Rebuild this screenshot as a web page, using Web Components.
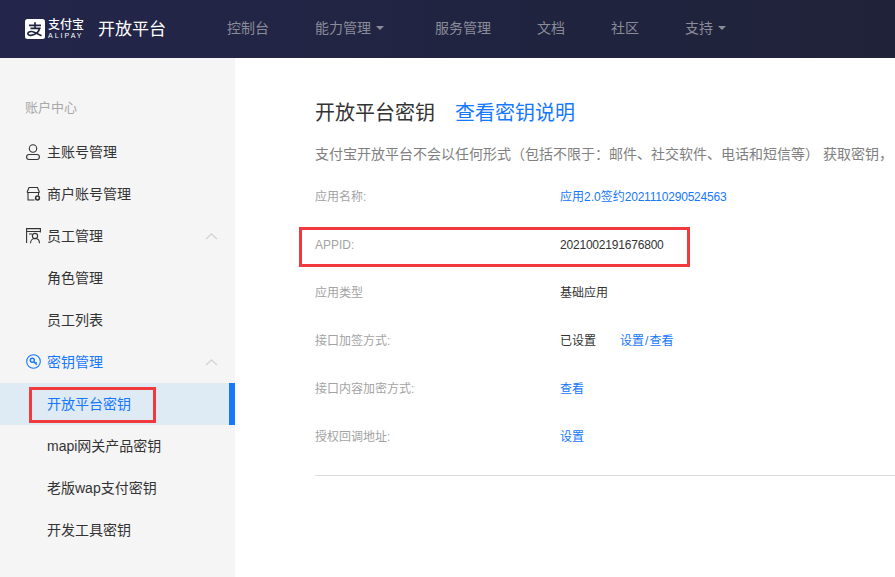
<!DOCTYPE html>
<html lang="zh-CN">
<head>
<meta charset="utf-8">
<title>开放平台密钥</title>
<style>
  html, body { margin: 0; height: 100%; overflow: hidden; background: #fff; }
  body { font-family: "Liberation Sans", "Noto Sans CJK SC", sans-serif; }
  /* 链接里的数字和斜杠在主文档作用域，这里微调字宽 */
  a .num { letter-spacing: -.2px; }
  a .sl { margin: 0 1px; }
</style>
</head>
<body>
<app-shell>
  <top-nav slot="top">
    <nav-link>控制台</nav-link>
    <nav-link caret>能力管理</nav-link>
    <nav-link>服务管理</nav-link>
    <nav-link>文档</nav-link>
    <nav-link>社区</nav-link>
    <nav-link caret>支持</nav-link>
  </top-nav>
  <side-menu slot="side">
    <side-item icon="user">主账号管理</side-item>
    <side-item icon="shop">商户账号管理</side-item>
    <side-item icon="staff" open>员工管理</side-item>
    <side-item>角色管理</side-item>
    <side-item>员工列表</side-item>
    <side-item icon="key" open accent>密钥管理</side-item>
    <side-item selected><red-box style="left:29px;top:4px;width:127px;height:36px"></red-box>开放平台密钥</side-item>
    <side-item>mapi网关产品密钥</side-item>
    <side-item>老版wap支付密钥</side-item>
    <side-item>开发工具密钥</side-item>
  </side-menu>
  <key-panel>
    <key-row label="应用名称:"><a>应用2.0签约<span class="num">2021110290524563</span></a></key-row>
    <key-row label="APPID:" latin><red-box style="left:-16px;top:7px;width:391px;height:40px"></red-box><span class="dark num">2021002191676800</span></key-row>
    <key-row label="应用类型"><span class="dark">基础应用</span></key-row>
    <key-row label="接口加签方式:"><span class="dark">已设置</span><a>设置<span class="sl">/</span>查看</a></key-row>
    <key-row label="接口内容加密方式:"><a>查看</a></key-row>
    <key-row label="授权回调地址:"><a>设置</a></key-row>
  </key-panel>
</app-shell>

<script>
// 小工具：把模板字符串放进 open shadow root
function shadow(el, html) {
  el.attachShadow({ mode: 'open' }).innerHTML = html;
}

class AppShell extends HTMLElement {
  constructor() {
    super();
    shadow(this, `
      <style>
        :host { display: flex; flex-direction: column; height: 577px; overflow: hidden; }
        .body { display: flex; flex: 1; min-height: 0; }
      </style>
      <slot name="top"></slot>
      <div class="body">
        <slot name="side"></slot>
        <slot></slot>
      </div>`);
  }
}

class TopNav extends HTMLElement {
  constructor() {
    super();
    shadow(this, `
      <style>
        :host { display: flex; align-items: center; height: 58px; flex: none; background: linear-gradient(90deg, #23264a, #1f2238); padding-left: 25px; color: #fff; }
        .logo { display: flex; align-items: center; width: 73px; flex: none; }
        svg { width: 20px; height: 20px; flex: none; display: block; }
        .brand { margin-left: 3px; display: flex; flex-direction: column; width: 50px; }
        .cn { font-size: 12px; line-height: 13px; font-weight: 500; white-space: nowrap; }
        .en { font-size: 7px; line-height: 7px; letter-spacing: 2px; white-space: nowrap; color: #fff; }
        .title { font-size: 17px; width: 129px; flex: none; white-space: nowrap; padding-bottom: 4px; }
        nav { display: flex; gap: 46px; padding-bottom: 4px; }
      </style>
      <div class="logo">
        <svg viewBox="0 0 20 20">
          <rect width="20" height="20" rx="2.500" fill="#fff"/>
          <path d="M4 6.300h12M10 3.200v6M5.500 9.300h9.300c-1.200 3.700-4.800 6.600-8.800 7-2.100.2-3.300-.8-3.100-2 .3-1.500 2.700-2.200 5-1.500 3 .8 5.600 2.300 8.600 3.900" fill="none" stroke="#212440" stroke-width="1.700"/>
        </svg>
        <div class="brand"><span class="cn">支付宝</span><span class="en">ALIPAY</span></div>
      </div>
      <div class="title">开放平台</div>
      <nav><slot></slot></nav>`);
  }
}

class NavLink extends HTMLElement {
  constructor() {
    super();
    const caret = this.hasAttribute('caret');
    shadow(this, `
      <style>
        :host { display: flex; align-items: center; font-size: 14px; color: #8a8c99; white-space: nowrap; }
        i { width: 0; height: 0; border: 4px solid transparent; border-top: 4px solid #8a8c99; border-bottom: 0; margin: 1px 5px 0; }
      </style>
      <slot></slot>${caret ? '<i></i>' : ''}`);
  }
}

class SideMenu extends HTMLElement {
  constructor() {
    super();
    shadow(this, `
      <style>
        :host { display: block; width: 235px; flex: none; background: #f5f5f5; padding-top: 29px; box-sizing: border-box; }
        .head { height: 44px; line-height: 42px; padding-left: 25px; font-size: 13px; color: #a9a9a9; }
      </style>
      <div class="head">账户中心</div>
      <slot></slot>`);
  }
}

const ICONS = {
  user: '<circle cx="7" cy="4.500" r="3.700"/><rect x=".6" y="10.500" width="12.800" height="5" rx="2.500"/>',
  shop: '<path d="M1 6.500L3 1.500h8.500l2 5M1 6.500h12.500M2 6.500v7.500h6.500M12.500 6.500v3"/><circle cx="11.500" cy="12" r="1.900" stroke-width="1.500"/>',
  staff: '<path d="M.6 15V.6h13.800v4M.6 3.500h13.800M3 6h3"/><circle cx="9" cy="8" r="2.600"/><path d="M4.500 15.300c0-2.900 2-4.800 4.500-4.800s4.500 1.900 4.500 4.800"/>',
  key: '<circle cx="7.500" cy="7.500" r="6.800"/><circle cx="6.300" cy="6.300" r="2" stroke-width="1.400"/><path d="M7.800 7.800l3 3M9.500 9.500l1.200-1.200" stroke-width="1.300"/>'
};

class SideItem extends HTMLElement {
  constructor() {
    super();
    const icon = this.getAttribute('icon');
    const open = this.hasAttribute('open');
    shadow(this, `
      <style>
        :host { display: flex; align-items: center; position: relative; height: 42px; padding: 0 0 2px 47px; font-size: 14px; color: #333; white-space: nowrap; box-sizing: border-box; }
        :host([accent]) { color: #1677ff; }
        :host([selected]) { background: #deeaf4; color: #1677ff; }
        :host([selected])::after { content: ''; position: absolute; right: 0; top: 0; bottom: 0; width: 6px; background: #1677ff; }
        .ic { position: absolute; left: 26px; top: 13px; width: 15px; height: 16px; fill: none; stroke: currentColor; stroke-width: 1.100; overflow: visible; }
        .ch { position: absolute; left: 205px; top: 18px; width: 13px; height: 7px; fill: none; stroke: #d4d4d4; stroke-width: 1.300; }
      </style>
      ${icon ? `<svg class="ic" viewBox="0 0 15 16">${ICONS[icon]}</svg>` : ''}
      <slot></slot>
      ${open ? '<svg class="ch" viewBox="0 0 13 7"><path d="M1 6l5.500-5L12 6"/></svg>' : ''}`);
  }
}

class KeyPanel extends HTMLElement {
  constructor() {
    super();
    shadow(this, `
      <style>
        :host { display: block; flex: 1; min-width: 0; padding: 40px 0 0 80px; overflow: hidden; }
        .head { display: flex; gap: 20px; font-size: 20px; line-height: 30px; color: #333; white-space: nowrap; }
        .head a { color: #1677ff; }
        .note { margin-top: 15px; font-size: 14px; line-height: 22px; color: #808080; white-space: nowrap; }
        .rows { margin-top: 7px; border-bottom: 1px solid #dcdcdc; padding-bottom: 15px; }
      </style>
      <div class="head"><span>开放平台密钥</span><a>查看密钥说明</a></div>
      <div class="note">支付宝开放平台不会以任何形式（包括不限于：邮件、社交软件、电话和短信等） 获取密钥，</div>
      <div class="rows"><slot></slot></div>`);
  }
}

class KeyRow extends HTMLElement {
  constructor() {
    super();
    shadow(this, `
      <style>
        :host { display: flex; align-items: center; position: relative; height: 48px; padding-bottom: 2px; font-size: 12px; white-space: nowrap; box-sizing: border-box; }
        :host([latin]) { padding: 2px 0 0; }
        .label { width: 245px; flex: none; color: #a3a3a3; }
        .value { display: flex; gap: 24px; }
        ::slotted(a) { color: #1677ff; }
        ::slotted(.dark) { color: #333; }
        ::slotted(.num) { letter-spacing: -.2px; }
      </style>
      <div class="label">${this.getAttribute('label')}</div>
      <div class="value"><slot></slot></div>`);
  }
}

// 截图上的红色标注框
class RedBox extends HTMLElement {
  constructor() {
    super();
    shadow(this, `
      <style>
        :host { display: block; position: absolute; box-sizing: border-box; border: 3px solid #f03a3d; pointer-events: none; }
      </style>`);
  }
}

customElements.define('app-shell', AppShell);
customElements.define('top-nav', TopNav);
customElements.define('nav-link', NavLink);
customElements.define('side-menu', SideMenu);
customElements.define('side-item', SideItem);
customElements.define('key-panel', KeyPanel);
customElements.define('key-row', KeyRow);
customElements.define('red-box', RedBox);
</script>
</body>
</html>
